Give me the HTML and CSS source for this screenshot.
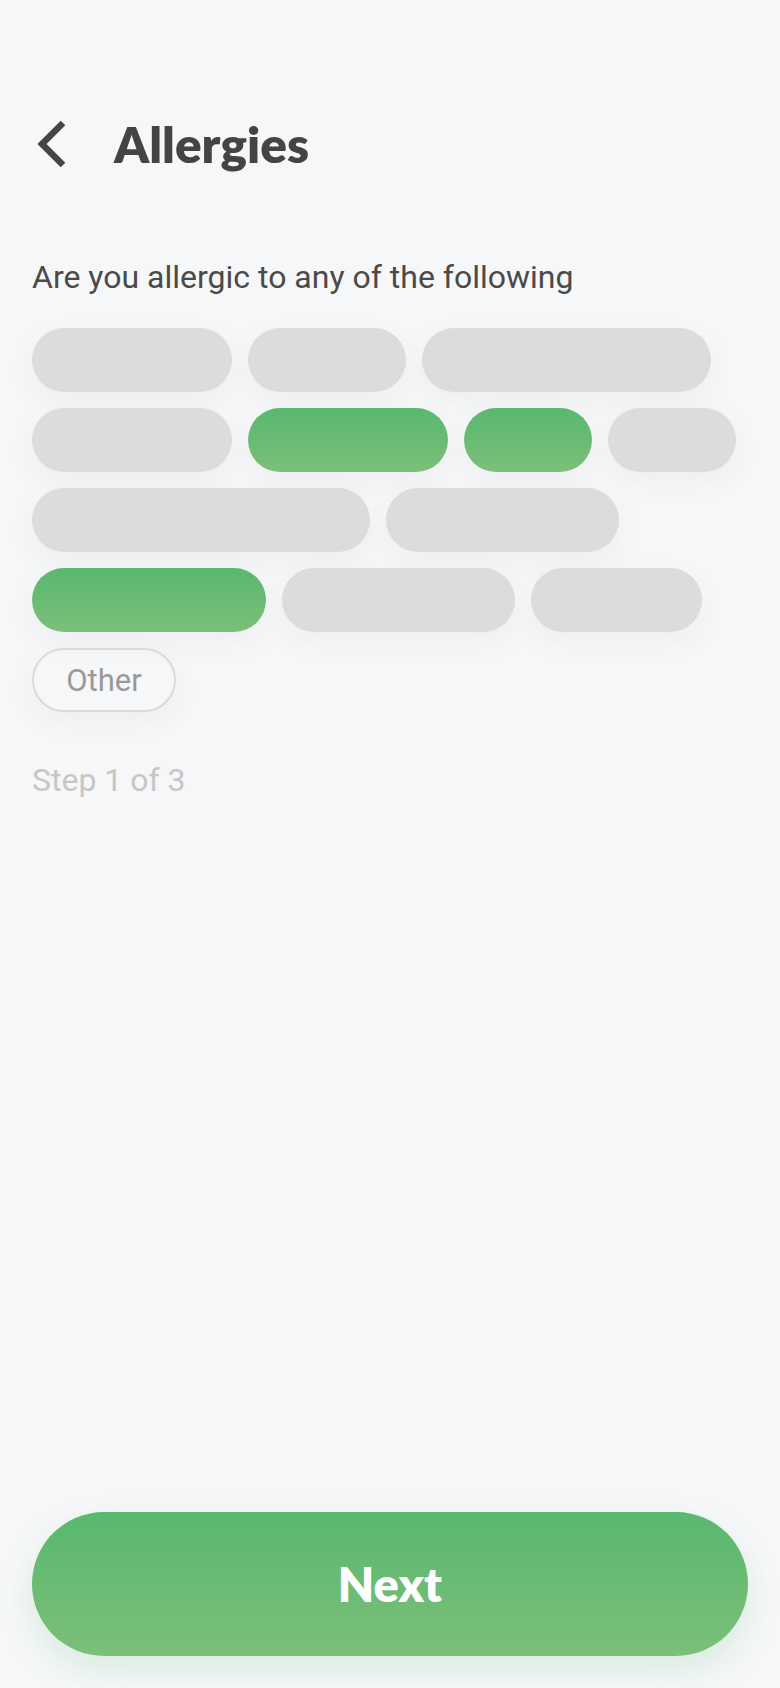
FILE: index.html
```html
<!DOCTYPE html>
<html lang="en">
<head>
<meta charset="utf-8">
<title>Allergies</title>
<link rel="stylesheet" href="styles.css">
</head>
<body>
<div class="screen">
  <header class="header">
    <button class="back" aria-label="Back">
      <svg width="32" height="48" viewBox="0 0 32 48"><polyline points="27,3 6,24 27,45" fill="none" stroke="#454545" stroke-width="6.5" stroke-linecap="butt" stroke-linejoin="miter"/></svg>
    </button>
    <h1 class="title">Allergies</h1>
  </header>
  <p class="question">Are you allergic to any of the following</p>
  <div class="chips">
    <span class="chip" style="width:200px"></span>
    <span class="chip" style="width:158px"></span>
    <span class="chip" style="width:289px"></span>
    <span class="chip" style="width:200px"></span>
    <span class="chip selected" style="width:200px"></span>
    <span class="chip selected" style="width:128px"></span>
    <span class="chip" style="width:128px"></span>
    <span class="chip" style="width:338px"></span>
    <span class="chip" style="width:233px"></span>
    <span class="chip selected" style="width:234px"></span>
    <span class="chip" style="width:233px"></span>
    <span class="chip" style="width:171px"></span>
    <span class="chip other">Other</span>
  </div>
  <p class="step">Step 1 of 3</p>
  <button class="next">Next</button>
</div>
</body>
</html>
```
FILE: styles.css
```css
html, body {
  margin: 0;
  padding: 0;
  background: #f6f7f9;
}
.screen {
  box-sizing: border-box;
  min-height: 1688px;
  display: flex;
  flex-direction: column;
  padding: 0 32px 32px;
  font-family: Roboto, "Liberation Sans", sans-serif;
}
.header {
  display: flex;
  align-items: center;
  height: 48px;
  margin-top: 120px;
}
.back {
  border: 0;
  background: none;
  padding: 0;
  margin: 0 0 0 4px;
  width: 32px;
  height: 48px;
  display: flex;
}
.title {
  margin: 0 0 0 46px;
  font-family: Lato, "Nunito", sans-serif;
  font-weight: 800;
  font-size: 49.5px;
  color: #444444;
  line-height: 48px;
}
.question {
  margin: 91px 0 0;
  font-size: 32px;
  line-height: 36px;
  color: #4a4a4a;
}
.chips {
  margin-top: 33px;
  display: flex;
  flex-wrap: wrap;
  gap: 16px;
}
.chip {
  box-sizing: border-box;
  height: 64px;
  border-radius: 32px;
  background: #dcdcdc;
  box-shadow: 0 10px 28px rgba(60, 70, 80, 0.05);
}
.chip.selected {
  background: linear-gradient(180deg, #59b86f 0%, #7cbf79 100%);
}
.chip.other {
  width: 144px;
  background: transparent;
  border: 2px solid #dadada;
  display: flex;
  align-items: center;
  justify-content: center;
  font-size: 31px;
  color: #999999;
}
.step {
  margin: 50px 0 0;
  font-size: 32px;
  line-height: 36px;
  color: #c6c6c6;
}
.next {
  margin-top: auto;
  height: 144px;
  width: 100%;
  border: 0;
  border-radius: 72px;
  background: linear-gradient(180deg, #59b86f 0%, #7cbf79 100%);
  box-shadow: 0 14px 32px rgba(90, 184, 111, 0.18);
  color: #ffffff;
  font-family: Lato, "Nunito", sans-serif;
  font-weight: 800;
  font-size: 47px;
  padding: 0;
}
```
